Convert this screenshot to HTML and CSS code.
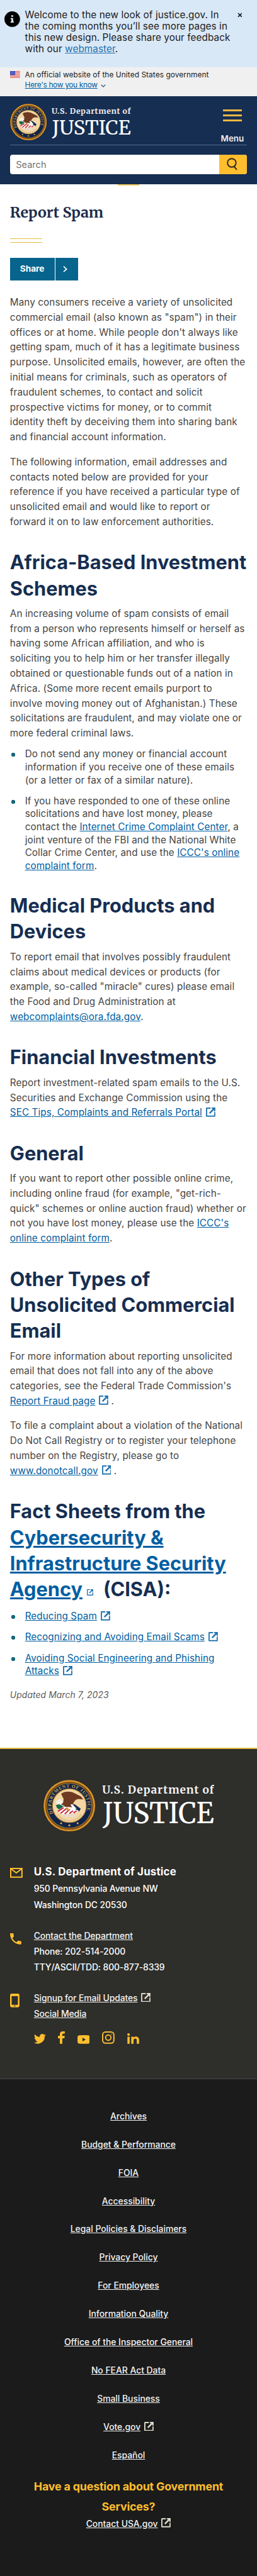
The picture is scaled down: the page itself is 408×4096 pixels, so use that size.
FILE: index.html
```
<!DOCTYPE html>
<html lang="en">
<head>
<meta charset="utf-8">
<title>Report Spam | U.S. Department of Justice</title>
<link rel="stylesheet" href="styles.css">
</head>
<body>
<svg class="defs" aria-hidden="true">
  <path id="ring" d="M18.500 65A35 35 0 1 1 81.500 65" fill="none"/>
  <symbol id="ext" viewBox="3 3 18 18"><path d="M19 18.8H5V5h6.500V3H5a2 2 0 0 0-2 2v14a2 2 0 0 0 2 2h14a2 2 0 0 0 2-2v-7h-2zM14 3v2.200h3l-7.800 7.800 1.800 1.800L18.800 7V10H21V3z" stroke="currentColor" stroke-width=".5"/></symbol>
  <symbol id="seal" viewBox="0 0 100 100">
    <circle cx="50" cy="50" r="50" fill="#7a4a12"/>
    <circle cx="50" cy="50" r="48" fill="none" stroke="#d9962e" stroke-width="3"/>
    <circle cx="50" cy="50" r="43.500" fill="#10244a"/>
    <circle cx="50" cy="50" r="43.500" fill="none" stroke="#b9822e" stroke-width="1.200"/>
    <circle cx="50" cy="50" r="32.500" fill="#f3d6a3" stroke="#c08a3a" stroke-width="1.500"/>
    <path d="M27 66A27 27 0 0 0 73 66" fill="none" stroke="#c9a878" stroke-width="2" stroke-dasharray="1.500 1.200"/>
    <path d="M25 41l8-4 5 5 2 9-8 2-7-6z" fill="#f7f1e4"/>
    <path d="M24 49l6-2 4 2 5 2-3 3-6 3-4-3z" fill="#1d6a4c"/>
    <path d="M34 27c6-5 15-5 22-3l16 8 5 6-10-1-5 2-4 5-1 7-6 4-9-2-4-4-4-1 4-4 1-7z" fill="#6e3a22"/>
    <path d="M53 49l7-2 12 9-3 5-7-1z" fill="#152c55"/>
    <path d="M52 48l4-1 8 9-6 1z" fill="#fff"/>
    <path d="M29 60l9-8 15 1 15 7-5 4-28 3z" fill="#fff"/>
    <path d="M28 61l11-7M33 65l13-11M41 66l10-9M50 65l7-5M58 64l6-4" stroke="#c4213f" stroke-width="2.400"/>
    <path d="M43 54l5 1 3 4-5 1z" fill="#d89a2c"/>
    <path d="M35 67h30l-6 5H42z" fill="#e8d9cf"/>
    <g fill="#d7a348"><circle cx="34" cy="84" r="2"/><circle cx="50" cy="88" r="2"/><circle cx="66" cy="84" r="2"/></g>
  </symbol>
</svg>

<div class="page">
  <section class="alert">
    <svg class="alert-icon" viewBox="0 0 25 25"><circle cx="12.500" cy="12.500" r="12.500"/><path d="M11 6.300h3v2.600h-3zM10 10.800h4v5.400h1v2H10v-2h1.200v-3.400H10z" fill="#d9e8f6"/></svg>
    <p>Welcome to the new look of justice.gov. In<br>the coming months you’ll see more pages in<br>this new design. Please share your feedback<br>with our <a href="#">webmaster</a>.</p>
    <svg class="alert-close" viewBox="0 0 8 8"><path d="M1 1l6 6M7 1L1 7"/></svg>
  </section>

  <section class="banner">
    <svg class="flag" viewBox="0 0 16 11"><path fill="#fff" d="M0 0h16v11H0z"/><path d="M0 .500h16M0 2.500h16M0 4.500h16M0 6.500h16M0 8.500h16M0 10.500h16" stroke="#d8413b"/><path fill="#2a37b5" d="M0 0h8v6.500H0z"/><path d="M1 1.500h6M1 3.300h6M1 5.100h6" stroke="#fff" stroke-width=".8" stroke-dasharray=".8 1"/></svg>
    <div>
      <p class="banner-text">An official website of the United States government</p>
      <p class="banner-link"><a href="#">Here's how you know</a><svg viewBox="0 0 8 5"><path d="M.700.700L4 4 7.300.700"/></svg></p>
    </div>
  </section>

  <header class="header">
    <div class="brand">
      <svg class="brand-logo" viewBox="0 0 274 83">
        <use href="#seal" width="83" height="83"/>
        <g transform="scale(.83)"><text class="seal-text"><textPath href="#ring" textLength="135">DEPARTMENT OF JUSTICE</textPath></text></g>
        <text class="logo-top" x="94" y="22.500" textLength="179">U.S. Department of</text>
        <text class="logo-main" x="95" y="69.500" textLength="178" lengthAdjust="spacingAndGlyphs">JUSTICE</text>
      </svg>
      <div class="menu"><span class="bars"></span><span>Menu</span></div>
    </div>
    <div class="search">
      <span class="search-input">Search</span>
      <span class="search-button"><svg viewBox="0 0 18 20"><circle cx="8" cy="8" r="6.800"/><path d="M11.500 13.500L16 19"/></svg></span>
    </div>
    <span class="tab"></span>
  </header>

  <main class="main">
    <h1>Report Spam</h1>
    <div class="rule"></div>
    <div class="share"><span>Share</span><i><svg viewBox="0 0 7 10"><path d="M1 .700L5.700 5 1 9.300"/></svg></i></div>

    <p>Many consumers receive a variety of unsolicited<br>commercial email (also known as "spam") in their<br>offices or at home. While people don't always like<br>getting spam, much of it has a legitimate business<br>purpose. Unsolicited emails, however, are often the<br>initial means for criminals, such as operators of<br>fraudulent schemes, to contact and solicit<br>prospective victims for money, or to commit<br>identity theft by deceiving them into sharing bank<br>and financial account information.</p>
    <p>The following information, email addresses and<br>contacts noted below are provided for your<br>reference if you have received a particular type of<br>unsolicited email and would like to report or<br>forward it on to law enforcement authorities.</p>

    <h2>Africa-Based Investment<br>Schemes</h2>
    <p>An increasing volume of spam consists of email<br>from a person who represents himself or herself as<br>having some African affiliation, and who is<br>soliciting you to help him or her transfer illegally<br>obtained or questionable funds out of a nation in<br>Africa. (Some more recent emails purport to<br>involve moving money out of Afghanistan.) These<br>solicitations are fraudulent, and may violate one or<br>more federal criminal laws.</p>
    <ul>
      <li>Do not send any money or financial account<br>information if you receive one of these emails<br>(or a letter or fax of a similar nature).</li>
      <li>If you have responded to one of these online<br>solicitations and have lost money, please<br>contact the <a href="#">Internet Crime Complaint Center</a>, a<br>joint venture of the FBI and the National White<br>Collar Crime Center, and use the <a href="#">ICCC's online<br>complaint form</a>.</li>
    </ul>

    <h2>Medical Products and<br>Devices</h2>
    <p>To report email that involves possibly fraudulent<br>claims about medical devices or products (for<br>example, so-called "miracle" cures) please email<br>the Food and Drug Administration at<br><a href="#">webcomplaints@ora.fda.gov</a>.</p>

    <h2>Financial Investments</h2>
    <p>Report investment-related spam emails to the U.S.<br>Securities and Exchange Commission using the<br><a href="#">SEC Tips, Complaints and Referrals Portal</a><svg class="ext"><use href="#ext"/></svg></p>

    <h2>General</h2>
    <p>If you want to report other possible online crime,<br>including online fraud (for example, "get-rich-<br>quick" schemes or online auction fraud) whether or<br>not you have lost money, please use the <a href="#">ICCC's<br>online complaint form</a>.</p>

    <h2>Other Types of<br>Unsolicited Commercial<br>Email</h2>
    <p>For more information about reporting unsolicited<br>email that does not fall into any of the above<br>categories, see the Federal Trade Commission's<br><a href="#">Report Fraud page</a><svg class="ext"><use href="#ext"/></svg> .</p>
    <p>To file a complaint about a violation of the National<br>Do Not Call Registry or to register your telephone<br>number on the Registry, please go to<br><a href="#">www.donotcall.gov</a><svg class="ext"><use href="#ext"/></svg> .</p>

    <h2>Fact Sheets from the<br><a href="#">Cybersecurity &amp;<br>Infrastructure Security<br>Agency</a><svg class="ext ext-small"><use href="#ext"/></svg> (CISA):</h2>
    <ul>
      <li><a href="#">Reducing Spam</a><svg class="ext"><use href="#ext"/></svg></li>
      <li><a href="#">Recognizing and Avoiding Email Scams</a><svg class="ext"><use href="#ext"/></svg></li>
      <li><a href="#">Avoiding Social Engineering and Phishing<br>Attacks</a><svg class="ext"><use href="#ext"/></svg></li>
    </ul>
    <p class="updated">Updated March 7, 2023</p>
  </main>

  <footer>
    <div class="contact">
      <svg class="contact-logo" viewBox="0 0 274 83">
        <use href="#seal" width="83" height="83"/>
        <g transform="scale(.83)"><text class="seal-text"><textPath href="#ring" textLength="135">DEPARTMENT OF JUSTICE</textPath></text></g>
        <text class="logo-top" x="94" y="22.500" textLength="179">U.S. Department of</text>
        <text class="logo-main" x="95" y="69.500" textLength="178" lengthAdjust="spacingAndGlyphs">JUSTICE</text>
      </svg>
      <div class="entry">
        <svg class="mail" viewBox="0 0 20 16"><path d="M1 1h18v14H1zM1.500 1.500L10 8l8.500-6.500" fill="none" stroke="currentColor" stroke-width="2"/></svg>
        <div><h3>U.S. Department of Justice</h3><p>950 Pennsylvania Avenue NW</p><p>Washington DC 20530</p></div>
      </div>
      <div class="entry">
        <svg class="phone" viewBox="3 3 18 18"><path d="M6.620 10.790a15.150 15.150 0 0 0 6.590 6.590l2.200-2.200a1 1 0 0 1 1.020-.240c1.120.370 2.330.570 3.570.570.550 0 1 .450 1 1V20c0 .550-.450 1-1 1C10.610 21 3 13.390 3 4c0-.550.450-1 1-1h3.500c.550 0 1 .450 1 1 0 1.250.200 2.450.570 3.570a1 1 0 0 1-.250 1.020z"/></svg>
        <div><p><a href="#">Contact the Department</a></p><p>Phone: 202-514-2000</p><p>TTY/ASCII/TDD: 800-877-8339</p></div>
      </div>
      <div class="entry">
        <svg class="mobile" viewBox="0 0 15 22"><path fill-rule="evenodd" d="M2.500 0h10A2.500 2.500 0 0 1 15 2.500v17a2.500 2.500 0 0 1-2.500 2.500h-10A2.500 2.500 0 0 1 0 19.500v-17A2.500 2.500 0 0 1 2.500 0zM2.500 4v14h10V4zM6.500 19h2v1.500h-2z"/></svg>
        <div><p><a href="#">Signup for Email Updates</a><svg class="ext"><use href="#ext"/></svg></p><p><a href="#">Social Media</a></p>
          <div class="social">
            <svg class="tw" viewBox="0 0 24 20"><path d="M24 2.400a10 10 0 0 1-2.800.8A5 5 0 0 0 23.300.500a10 10 0 0 1-3.100 1.200 4.900 4.900 0 0 0-8.400 4.500A14 14 0 0 1 1.700 1a4.900 4.900 0 0 0 1.500 6.600A5 5 0 0 1 1 7a4.900 4.900 0 0 0 4 4.900 5 5 0 0 1-2.200.1 4.900 4.900 0 0 0 4.600 3.400A10 10 0 0 1 0 17.500 14 14 0 0 0 21.500 5 10 10 0 0 0 24 2.400z"/></svg>
            <svg class="fb" viewBox="0 0 11 20"><path d="M3 20v-9H0V7.300h3V5c0-3.200 1.800-5 4.700-5H11v3.500H9C7.400 3.500 7 4.200 7 5.300v2h3.900L10.300 11H7v9z"/></svg>
            <svg class="yt" viewBox="0 0 20 14"><path fill-rule="evenodd" d="M3 .300Q10-.3 17 .300q2.700.2 2.900 3 .2 3.700 0 7.400-.2 2.800-2.900 3Q10 14.300 3 13.700q-2.700-.2-2.900-3-.2-3.700 0-7.400Q.3.500 3 .300zM8 4v6l5.200-3z"/></svg>
            <svg class="ig" viewBox="0 0 20 20"><rect x="1" y="1" width="18" height="18" rx="4.500"/><circle cx="10" cy="10" r="4.300"/><path d="M14.800 4.900h1"/></svg>
            <svg class="li" viewBox="0 0 19 17"><path d="M.300 5.600h3.600V17H.300zM2.100 0a2.100 2.100 0 1 1 0 4.200 2.100 2.100 0 0 1 0-4.200zM6.400 5.600h3.500v1.600c.5-1 1.800-1.900 3.600-1.900 3.800 0 5.500 2.200 5.500 5.900V17h-3.700v-5.300c0-2-.6-3.200-2.400-3.200-2 0-2.800 1.400-2.800 3.200V17H6.400z"/></svg>
          </div>
        </div>
      </div>
    </div>

    <div class="identifier">
      <nav>
        <a href="#">Archives</a>
        <a href="#">Budget &amp; Performance</a>
        <a href="#">FOIA</a>
        <a href="#">Accessibility</a>
        <a href="#">Legal Policies &amp; Disclaimers</a>
        <a href="#">Privacy Policy</a>
        <a href="#">For Employees</a>
        <a href="#">Information Quality</a>
        <a href="#">Office of the Inspector General</a>
        <a href="#">No FEAR Act Data</a>
        <a href="#">Small Business</a>
        <span><a href="#">Vote.gov</a><svg class="ext"><use href="#ext"/></svg></span>
        <a href="#">Español</a>
      </nav>
      <p class="question">Have a question about Government<br>Services?</p>
      <p class="usa"><a href="#">Contact USA.gov</a><svg class="ext"><use href="#ext"/></svg></p>
    </div>
  </footer>
</div>
</body>
</html>
```
FILE: styles.css
```
* { box-sizing: border-box; }
html { background: #1b1b1b; }
body { margin: 0; font-family: Inter, "Liberation Sans", sans-serif; color: #1b1b1b; overflow-x: hidden; }
p, h1, h2, h3, ul { margin: 0; padding: 0; font-weight: 400; }
a { color: #005ea2; text-decoration: underline; }
svg { display: block; flex: none; }
.defs { position: absolute; width: 0; height: 0; }
.seal-text { font: 700 9px "Liberation Serif", serif; fill: #c9a24a; }
.logo-top { font: 700 17.500px Merriweather, "Noto Serif", serif; fill: #f4f4f4; }
.logo-main { font: 400 46px Merriweather, "Noto Serif", serif; fill: #fff; }

.page { zoom: .991; background: #fff; white-space: nowrap; }

.alert { display: flex; height: 108px; padding: 14.800px 0 0 7px; background: #d9e8f6; font-size: 15.400px; line-height: 18.400px; letter-spacing: .006em; }
.alert-icon { width: 25px; height: 25px; margin: 3.500px 8px 0 0; }
.alert p { width: 340px; }
.alert a { color: #2672b0; }
.alert-close { width: 8px; height: 8px; margin-top: 5.500px; fill: none; stroke: #1b1b1b; stroke-width: 1.700; }

.banner { display: flex; gap: 8px; height: 46px; padding: 4.500px 16px 0; background: #f0f0f0; font-size: 12px; line-height: 16px; }
.flag { width: 16px; height: 11px; margin-top: 1.500px; }
.banner-text { letter-spacing: .006em; }
.banner-link { display: flex; align-items: center; gap: 5px; letter-spacing: -.026em; }
.banner-link svg { width: 8px; height: 5px; margin-top: 3px; fill: none; stroke: #3d6a80; stroke-width: 1.400; }

.header { position: relative; height: 142px; padding: 0 16px; background: #162e51; }
.brand { display: flex; justify-content: space-between; height: 79px; padding-top: 13px; border-bottom: 1px solid #5a6c8c; }
.brand-logo { width: 194px; height: 58.700px; }
.menu { display: flex; flex-direction: column; align-items: center; gap: 19px; width: 37px; margin: 9px 5px 0 0; color: #f0f0f0; font-size: 13.500px; font-weight: 600; line-height: 16px; }
.bars { width: 30px; height: 20px; background: linear-gradient(#f2b640 3px, transparent 3px 8px, #f2b640 8px 11px, transparent 11px 16px, #f2b640 16px 19px, transparent 19px); }
.search { display: flex; height: 32px; margin-top: 15px; overflow: hidden; border-radius: 4px; background: #fff; }
.search-input { flex: 1; padding-left: 9.500px; color: #757575; font-size: 14.700px; line-height: 33px; }
.search-button { width: 45px; padding: 5px 0 0 13px; background: #ffbe2e; }
.search-button svg { width: 18px; height: 20px; fill: none; stroke: #2d2a1c; stroke-width: 2; }
.tab { position: absolute; left: 189px; top: 142px; width: 34px; height: 1.500px; background: #f2ca5c; }

.main { padding: 31px 16px 72.400px; color: #454545; font-size: 15.400px; line-height: 24px; letter-spacing: .006em; }
h1 { color: #1b2b4b; font: 700 23.400px/28px Merriweather, "Noto Serif", serif; letter-spacing: 0; }
.rule { width: 52px; height: 8px; margin-top: 27px; border: solid #e7bd3b; border-width: 2px 0; }
.share { display: flex; width: 109px; height: 36px; margin: 24px 0 23.400px; background: #07648d; color: #fff; font-size: 13.800px; font-weight: 700; line-height: 35px; letter-spacing: 0; }
.share span { width: 73px; padding-left: 16px; border-right: 1px solid #fff; }
.share i { padding: 13px 0 0 12px; }
.share svg { width: 7px; height: 10px; fill: none; stroke: #fff; stroke-width: 1.700; }
.main p + p { margin-top: 16px; }
h2 { margin: 32px 0 8.200px; color: #162e51; font-size: 31px; font-weight: 700; line-height: 41.600px; letter-spacing: 0; }
ul { margin-top: 11.500px; list-style: none; line-height: 20.800px; }
h2 + ul { margin-top: 13px; }
li { padding-left: 24px; background: radial-gradient(circle, #16697a 3px, transparent 3.500px) 1px 7.200px / 8px 8px no-repeat; }
li + li { margin-top: 12.800px; }
.ext { display: inline-block; width: 15px; height: 15px; margin-left: 6px; vertical-align: -1.500px; fill: #1a6fae; color: #1a6fae; }
.ext-small { width: 10px; height: 10px; margin: 0 9px 0 7px; vertical-align: 1px; }
.main .updated { margin-top: 17.800px; color: #5c5c5c; font-size: 14px; font-style: italic; line-height: 22px; }

.contact { padding: 49px 16px 55.800px; border-top: 3px solid #e3bd3e; border-bottom: 1px solid #484848; background: #2e2e2a; color: #fff; font-size: 14px; font-weight: 500; line-height: 25.400px; }
.contact p { font-weight: 500; }
footer a { color: #f4f4f4; }
footer .ext { fill: #e8e4d4; color: #e8e4d4; }
.contact-logo { width: 274px; height: 83px; margin: 0 0 49.400px 53.500px; }
.entry { display: flex; margin-bottom: 24px; fill: #ffbe2e; color: #ffbe2e; }
.entry:last-child { margin-bottom: 0; }
.entry > svg { margin-right: auto; }
.entry > div { width: 341.500px; color: #fff; letter-spacing: -.007em; }
h3 { font-size: 17px; font-weight: 700; line-height: 31px; letter-spacing: .012em; }
.mail { width: 20px; height: 16px; margin-top: 9.500px; }
.phone { width: 18px; height: 18px; margin-top: 9px; }
.mobile { width: 15px; height: 22px; margin-top: 5px; }
.social { display: flex; align-items: flex-end; height: 35px; fill: #ffbe2e; }
.tw { width: 19px; height: 16px; margin-right: 20px; }
.fb { width: 11px; height: 20px; margin-right: 19.500px; }
.yt { width: 20px; height: 14px; margin-right: 20px; }
.ig { width: 20px; height: 20px; margin-right: 20px; fill: none; stroke: #f5ba36; stroke-width: 2; }
.li { width: 19px; height: 17px; }

.identifier { height: 796px; padding-top: 50px; background: #1b1b1b; color: #f4f4f4; font-size: 14px; font-weight: 500; line-height: 20px; text-align: center; }
nav { display: flex; flex-direction: column; align-items: center; gap: 25.350px; }
nav > * { height: 20px; }
.question { margin: 23.400px 0 2.500px; color: #ffbe2e; font-size: 18px; font-weight: 700; line-height: 32px; letter-spacing: -.01em; }
.usa { font-weight: 500; }
```
